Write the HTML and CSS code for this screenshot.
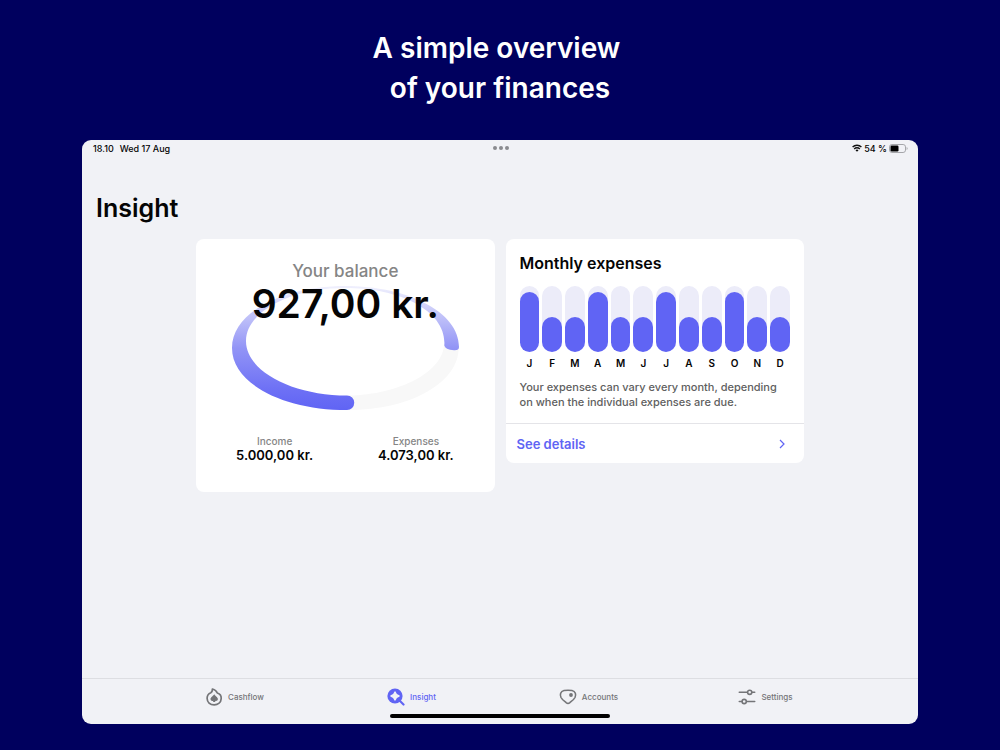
FILE: index.html
```html
<!DOCTYPE html>
<html lang="en">
<head>
    <meta charset="UTF-8">
    <meta name="viewport" content="width=device-width, initial-scale=1.0">
    <title>Insight</title>
    <link rel="stylesheet" href="styles.css">
</head>
<body>
    <h1 class="headline">A simple overview&nbsp;<br>of your finances</h1>

    <div class="device">
        <div class="status-bar">
            <div class="status-left">
                <span>18.10</span>
                <span>Wed 17 Aug</span>
            </div>
            <div class="dots"><i></i><i></i><i></i></div>
            <div class="status-right">
                <svg class="wifi" viewBox="0 0 10 8" aria-hidden="true">
                    <path d="M.6 3.1a6.200 6.200 0 0 1 8.800 0M2.200 4.900a3.900 3.900 0 0 1 5.600 0" fill="none" stroke="#111" stroke-width="1.400"/>
                    <path d="M3.500 6.200a2.100 2.100 0 0 1 3 0L5 7.800z" fill="#111"/>
                </svg>
                <span>54 %</span>
                <svg class="battery" viewBox="0 0 19 9" aria-hidden="true">
                    <rect x=".5" y=".5" width="16" height="8" rx="2.4" fill="none" stroke="#a5a6aa"/>
                    <rect x="1.5" y="1.5" width="8" height="6" rx="1.2" fill="#000"/>
                    <path d="M17.6 3v3c.8-.3 1-.9 1-1.5s-.2-1.2-1-1.5z" fill="#a5a6aa"/>
                </svg>
            </div>
        </div>

        <main class="content">
            <h2 class="page-title">Insight</h2>

            <div class="cards">
                <section class="card balance">
                    <h3 class="balance-label">Your balance</h3>
                    <div class="gauge">
                        <svg class="ring" viewBox="0 0 228 126" aria-hidden="true">
                            <defs>
                                <linearGradient id="ringFill" x1="0" y1="0" x2="0" y2="1">
                                    <stop offset="0" stop-color="#f0f0fd"/>
                                    <stop offset=".2" stop-color="#c9caf9"/>
                                    <stop offset=".5" stop-color="#9294f6"/>
                                    <stop offset=".85" stop-color="#6c6ff5"/>
                                    <stop offset="1" stop-color="#6064f4"/>
                                </linearGradient>
                            </defs>
                            <path fill="#f8f8f8" d="M227.500 58C231 94 183 124 117 124V109.500C169 109 213 85 213 58z"/>
                            <path fill="url(#ringFill)" d="M116 124C53 124 1 98 1 62C1 26 53 0 114 0C177 0 228 26 228 61Q228 64.500 223 64.200Q214 63.500 213.300 59.500C216 26 171 2 114 2C59 2 15 26 15 55C15 86 63 109.500 116 109.500A7.250 7.250 0 0 1 116 124z"/>
                        </svg>
                        <strong class="amount">927,00 kr.</strong>
                    </div>
                    <dl class="totals">
                        <div>
                            <dt>Income</dt>
                            <dd>5.000,00 kr.</dd>
                        </div>
                        <div>
                            <dt>Expenses</dt>
                            <dd>4.073,00 kr.</dd>
                        </div>
                    </dl>
                </section>

                <section class="card expenses">
                    <div class="expenses-body">
                        <h3 class="card-title">Monthly expenses</h3>
                        <ul class="chart">
                            <li><span class="track"><span class="bar high"></span></span>J</li>
                            <li><span class="track"><span class="bar"></span></span>F</li>
                            <li><span class="track"><span class="bar"></span></span>M</li>
                            <li><span class="track"><span class="bar high"></span></span>A</li>
                            <li><span class="track"><span class="bar"></span></span>M</li>
                            <li><span class="track"><span class="bar"></span></span>J</li>
                            <li><span class="track"><span class="bar high"></span></span>J</li>
                            <li><span class="track"><span class="bar"></span></span>A</li>
                            <li><span class="track"><span class="bar"></span></span>S</li>
                            <li><span class="track"><span class="bar high"></span></span>O</li>
                            <li><span class="track"><span class="bar"></span></span>N</li>
                            <li><span class="track"><span class="bar"></span></span>D</li>
                        </ul>
                        <p class="note">Your expenses can vary every month, depending<br>on when the individual expenses are due.</p>
                    </div>
                    <a class="details" href="#details">
                        See details
                        <svg class="chevron" viewBox="0 0 6 10" aria-hidden="true">
                            <path d="M1 1l4 4-4 4" fill="none" stroke="currentColor" stroke-width="1.2"/>
                        </svg>
                    </a>
                </section>
            </div>
        </main>

        <nav class="tab-bar">
            <div class="tabs">
                <a class="tab" href="#cashflow">
                    <svg viewBox="0 0 18 18" aria-hidden="true">
                        <path d="M7.400 1C10.200 1.800 11.600 3.200 12.300 5C14.900 5.800 16.400 7.800 16.200 10.600C16 14.300 13 16.800 9.200 16.800C5 16.800 2.100 14.200 2.100 10.300C2.100 7.500 3.600 5.600 5.800 4.700C7 4 7.500 2.800 7.400 1z" fill="none" stroke="currentColor" stroke-width="1.700" stroke-linejoin="round"/>
                        <path d="M9.200 5.900C9.600 7.800 12.900 8.800 12.900 11C12.900 12.700 11.400 13.200 10 12.700L10.400 14H8L8.400 12.700C7 13.200 5.500 12.700 5.500 11C5.500 8.800 8.800 7.800 9.200 5.900z" fill="currentColor"/>
                    </svg>
                    Cashflow
                </a>
                <a class="tab active" href="#insight">
                    <svg viewBox="0 0 18 18" aria-hidden="true">
                        <path d="M12.500 12.500l4 4" stroke="currentColor" stroke-width="2.200" stroke-linecap="round"/>
                        <circle cx="8" cy="8" r="7.600" fill="currentColor"/>
                        <path d="M8 3.900Q8.900 7.100 12.100 8Q8.900 8.900 8 12.100Q7.100 8.900 3.900 8Q7.100 7.100 8 3.900z" fill="#f1f2f6" stroke="#f1f2f6" stroke-width="1.300" stroke-linejoin="round"/>
                    </svg>
                    Insight
                </a>
                <a class="tab" href="#accounts">
                    <svg viewBox="0 0 18 18" aria-hidden="true">
                        <path d="M5 2.500Q9 1.900 13 2.500C16.500 3.300 17.400 6.500 16 9.500C14.800 11.800 12.600 13.200 10.600 14.800Q9 16 7.400 14.800C5.400 13.200 3.200 11.800 2 9.500C.6 6.500 1.500 3.300 5 2.500z" fill="none" stroke="currentColor" stroke-width="1.600"/>
                        <circle cx="12" cy="7" r="1.900" fill="currentColor"/>
                    </svg>
                    Accounts
                </a>
                <a class="tab" href="#settings">
                    <svg viewBox="0 0 18 18" aria-hidden="true">
                        <g fill="none" stroke="currentColor" stroke-width="1.600" stroke-linecap="round">
                            <path d="M1.300 4.300h8M14.200 4.300h2.500M1.300 13.500h2.400M8.700 13.500h8"/>
                            <circle cx="11.700" cy="4.300" r="2.100"/>
                            <circle cx="6.200" cy="13.500" r="2.100"/>
                        </g>
                    </svg>
                    Settings
                </a>
            </div>
            <div class="home-indicator"></div>
        </nav>
    </div>
</body>
</html>
```
FILE: styles.css
```css
:root {
    --navy: #00005e;
    --accent: #6064f4;
    --screen: #f1f2f6;
    --track: #ececf9;
    --grey: #858585;
}

* {
    box-sizing: border-box;
    margin: 0;
    padding: 0;
}

body {
    min-height: 100vh;
    display: flex;
    flex-direction: column;
    padding: 28px 82px 26px;
    background: var(--navy);
    color: #050505;
    font-family: Inter, "Liberation Sans", sans-serif;
}

.headline {
    color: #fff;
    font-size: 28px;
    font-weight: 600;
    line-height: 40px;
    text-align: center;
}

.device {
    flex: 1;
    display: flex;
    flex-direction: column;
    margin-top: 32px;
    border-radius: 9px;
    background: var(--screen);
    overflow: hidden;
}

/* Status bar */
.status-bar {
    display: grid;
    grid-template-columns: 1fr auto 1fr;
    align-items: center;
    height: 16px;
    padding: 0 10px 0 11px;
    font-size: 9px;
    font-weight: 500;
}

.status-left {
    display: flex;
    gap: 6px;
}

.dots {
    display: flex;
    gap: 2px;
}

.dots i {
    width: 4px;
    height: 4px;
    border-radius: 50%;
    background: #8a8b8f;
}

.status-right {
    display: flex;
    justify-content: flex-end;
    align-items: center;
    gap: 2px;
}

.wifi {
    width: 10px;
    height: 8px;
}

.battery {
    width: 19px;
    height: 9px;
}

/* Content */
.content {
    flex: 1;
}

.page-title {
    margin: 36px 14px 15px;
    font-size: 25px;
    font-weight: 600;
    line-height: 32px;
}

.cards {
    display: grid;
    grid-template-columns: 1fr 1fr;
    align-items: start;
    gap: 11px;
    max-width: 608px;
    margin: 0 auto;
}

.card {
    border-radius: 8px;
    background: #fff;
    overflow: hidden;
}

.balance {
    padding: 22px 8px 29px;
    text-align: center;
}

.balance-label {
    color: var(--grey);
    font-size: 17px;
    font-weight: 500;
    line-height: 20px;
}

/* The amount and the ring share one cell */
.gauge {
    display: grid;
    justify-items: center;
}

.gauge > * {
    grid-area: 1 / 1;
}

.ring {
    width: 228px;
    height: 126px;
    margin-top: 5px;
}

.amount {
    z-index: 1;
    font-size: 39px;
    font-weight: 600;
    line-height: 46px;
}

.totals {
    display: grid;
    grid-template-columns: 1fr 1fr;
    margin-top: 23px;
}

.totals dt {
    color: var(--grey);
    font-size: 10px;
    font-weight: 500;
    line-height: 12px;
}

.totals dd {
    font-size: 13px;
    font-weight: 600;
    line-height: 16px;
}

.expenses-body {
    padding: 14px 14px 13px;
}

.card-title {
    font-size: 16px;
    font-weight: 600;
    line-height: 20px;
}

.chart {
    display: grid;
    grid-template-columns: repeat(12, 1fr);
    gap: 3px;
    margin-top: 13px;
    list-style: none;
    font-size: 10px;
    font-weight: 600;
    line-height: 12px;
    text-align: center;
}

.track {
    display: flex;
    align-items: flex-end;
    height: 66px;
    margin-bottom: 5px;
    border-radius: 10px;
    background: var(--track);
}

.bar {
    width: 100%;
    height: 35px;
    border-radius: 10px;
    background: var(--accent);
}

.bar.high {
    height: 60px;
}

.note {
    margin-top: 11px;
    color: #606060;
    font-size: 11px;
    font-weight: 500;
    line-height: 15px;
}

.details {
    display: flex;
    justify-content: space-between;
    align-items: center;
    height: 40px;
    padding: 0 19px 0 11px;
    border-top: 1px solid #e4e4e8;
    color: var(--accent);
    font-size: 13px;
    font-weight: 600;
    text-decoration: none;
}

.chevron {
    width: 6px;
    height: 10px;
}

/* Tab bar */
.tab-bar {
    display: flex;
    flex-direction: column;
    align-items: center;
    padding-bottom: 6px;
    border-top: 1px solid #dddee2;
}

.tabs {
    display: grid;
    grid-template-columns: repeat(4, 1fr);
    width: 100%;
    max-width: 708px;
}

.tab {
    display: flex;
    justify-content: center;
    align-items: center;
    gap: 5px;
    height: 35px;
    color: #747578;
    font-size: 8px;
    font-weight: 500;
    text-decoration: none;
}

.tab svg {
    width: 18px;
    height: 18px;
}

.tab.active {
    color: var(--accent);
}

.home-indicator {
    width: 220px;
    height: 4px;
    border-radius: 2px;
    background: #000;
}
```
